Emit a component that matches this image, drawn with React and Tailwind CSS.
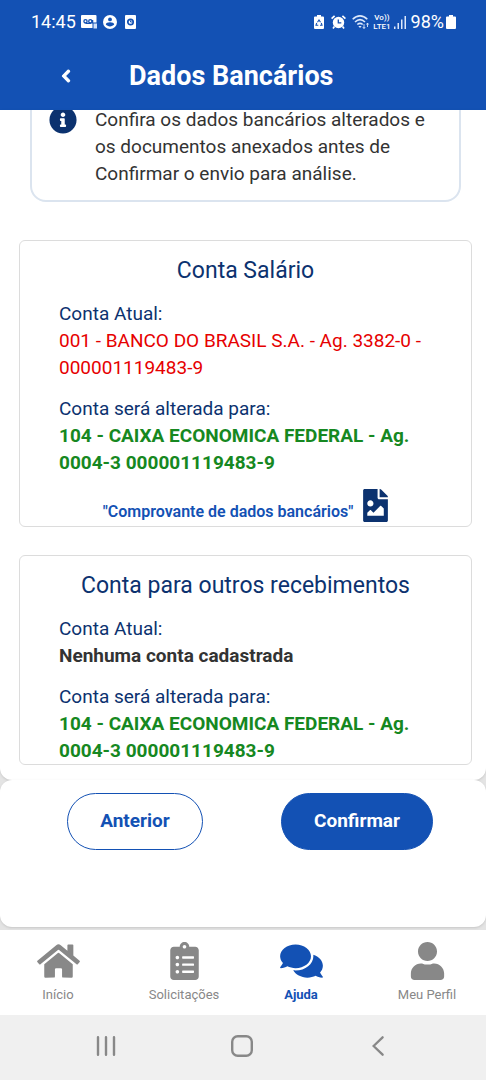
import React from 'react';
import {
  FaChevronLeft,
  FaClipboardList,
  FaComments,
  FaFileImage,
  FaHome,
  FaInfoCircle,
  FaUser,
} from 'react-icons/fa';

const StatusBar = () => (
  <div className="flex h-11 items-center justify-between pl-[31px] pr-[30px] text-white">
    <div className="flex items-center">
      <span className="text-lg leading-5">14:45</span>
      {/* Correio de voz */}
      <svg width="17" height="14" viewBox="0 0 17 14" className="ml-[5px]">
        <rect width="15.5" height="13" rx="1" fill="#fff" />
        <g fill="none" stroke="#1351b4" strokeWidth="1.3">
          <circle cx="4.5" cy="6.3" r="1.6" />
          <circle cx="9.3" cy="6.3" r="1.6" />
          <path d="M4.5 8.3h6M11.6 5v3.5" />
        </g>
        <rect x="11.5" y="7.5" width="5.5" height="6.5" fill="#1351b4" />
        <rect x="12.5" y="8.5" width="3.5" height="5" fill="#cfe0fa" />
      </svg>
      <svg width="14" height="14" viewBox="0 0 14 14" className="ml-[5px]">
        <circle cx="7" cy="7" r="7" fill="#fff" />
        <circle cx="7" cy="4.4" r="1.9" fill="#1351b4" />
        <path d="M2.8 9.6c0-3 8.4-3 8.4 0-2 2.4-6.4 2.4-8.4 0z" fill="#1351b4" />
      </svg>
      <svg width="12" height="14" viewBox="0 0 12 14" className="ml-2">
        <rect width="11" height="14" rx="1" fill="#fff" />
        <circle cx="5.5" cy="7" r="2.7" fill="none" stroke="#1351b4" strokeWidth="1.7" />
        <path d="M5.5 5.5V7H7" fill="none" stroke="#1351b4" />
      </svg>
    </div>

    <div className="flex items-center">
      <svg width="10" height="14" viewBox="0 0 10 14">
        <path d="M3 0h4v1.5h2a1 1 0 0 1 1 1V13a1 1 0 0 1-1 1H1a1 1 0 0 1-1-1V2.5a1 1 0 0 1 1-1h2z" fill="#fff" />
        <path d="M3.5 7.2 5 5l1.5 2.2M7.3 8l.7 2.2H6M4.3 10.2H2L2.7 8" fill="none" stroke="#1351b4" strokeWidth="1.1" />
      </svg>
      <svg width="15" height="14" viewBox="0 0 15 14" className="ml-[7px]">
        <circle cx="7.5" cy="7.5" r="5.7" fill="#fff" />
        <path d="M.6 3.6 3.6.8M14.4 3.6 11.4.8M3.4 11.6 2 13.4M11.6 11.6l1.4 1.8" stroke="#fff" strokeWidth="1.7" />
        <path d="M7.3 4.5v3.3h3" fill="none" stroke="#1351b4" strokeWidth="1.3" />
      </svg>
      <svg width="18" height="14" viewBox="0 0 18 14" className="ml-1.5" fill="none" stroke="#dce8fb" strokeWidth="1.6">
        <path d="M.7 4.3c4.6-4.6 10-4.6 14.6 0M3 7c3.4-3.2 6.6-3.2 10 0M5.3 9.5c2-1.7 3.4-1.7 5.4 0" />
        <path d="M6.3 11h3.4L8 13z" fill="#dce8fb" stroke="none" />
        <path d="M12 9v4.5M10.8 12l1.2 1.5 1.2-1.5M15.5 12V8M14.5 9.5l1-1.5 1 1.5" strokeWidth=".9" />
      </svg>
      <span className="ml-[3px] flex flex-col items-center text-[8px] font-medium leading-[9px]">
        <span>Vo))</span>
        <span>LTE1</span>
      </span>
      <svg width="13" height="14" viewBox="0 0 13 14" className="ml-[3px]" fill="#dce8fb">
        <rect y="11.5" width="1.5" height="2.5" />
        <rect x="3.5" y="8" width="1.5" height="6" />
        <rect x="7" y="4.5" width="1.5" height="9.5" />
        <rect x="10.5" y="1" width="1.5" height="13" />
      </svg>
      <span className="ml-1 text-lg leading-5">98%</span>
      <svg width="10" height="14" viewBox="0 0 10 14" className="ml-0.5">
        <path d="M3 0h4v1.5h2a1 1 0 0 1 1 1V13a1 1 0 0 1-1 1H1a1 1 0 0 1-1-1V2.5a1 1 0 0 1 1-1h2z" fill="#fff" />
      </svg>
    </div>
  </div>
);

const AccountCard = ({ title, current, currentClass, next, children }) => (
  <section className="mt-7 rounded-md border border-[#dcdcdc] text-[19px] leading-[27px]">
    <h2 className="mt-3.5 text-center text-[23px] leading-8 text-[#0c326f]">{title}</h2>
    <div className="mt-[13px] px-[39px]">
      <p className="text-[#0c326f]">Conta Atual:</p>
      <p className={currentClass}>{current}</p>
    </div>
    <div className="mt-3.5 px-[39px]">
      <p className="text-[#0c326f]">Conta será alterada para:</p>
      <p className="font-bold text-[#168821]">{next}</p>
    </div>
    {children}
  </section>
);

const NavItem = ({ icon: Icon, label, active }) => (
  <a
    href="#"
    className={`flex w-20 flex-col items-center ${active ? 'font-bold text-[#1351b4]' : 'text-[#888888]'}`}
  >
    <Icon className="h-[38px] w-[43px]" />
    <span className="mt-1.5 text-[13px] leading-[18px]">{label}</span>
  </a>
);

const App = () => {
  const newAccount = '104 - CAIXA ECONOMICA FEDERAL - Ag. 0004-3 000001119483-9';

  return (
    <div className="flex h-screen flex-col bg-[#e4e4e4] font-['Roboto',sans-serif]">
      <header className="h-[110px] shrink-0 bg-[#1351b4] text-white">
        <StatusBar />
        <div className="flex h-16 items-center">
          <button type="button" aria-label="Voltar" className="ml-[58px] p-0.5">
            <FaChevronLeft className="h-3.5 w-3 stroke-current stroke-[40px]" />
          </button>
          <h1 className="ml-[55px] text-[27px] font-bold leading-8">Dados Bancários</h1>
        </div>
      </header>

      <main className="min-h-0 flex-1 overflow-hidden rounded-b-xl bg-white pl-[19px] pr-3.5 shadow">
        <div className="mx-[11px] -mt-6 mb-[38px] flex rounded-2xl border-2 border-[#dbe4ef] pb-[13px] pl-[17px] pr-8 pt-[18px]">
          <FaInfoCircle className="h-7 w-7 shrink-0 text-[#0c326f]" />
          <p className="ml-[18px] text-[19px] leading-[27px] text-[#333333]">
            Confira os dados bancários alterados e os documentos anexados antes de Confirmar o envio para análise.
          </p>
        </div>

        <AccountCard
          title="Conta Salário"
          current="001 - BANCO DO BRASIL S.A. - Ag. 3382-0 - 000001119483-9"
          currentClass="text-[#e60000]"
          next={newAccount}
        >
          <a href="#" className="mb-1 mt-[13px] flex items-end justify-center gap-2.5 text-[#1351b4]">
            <span className="text-base font-semibold leading-5">"Comprovante de dados bancários"</span>
            <FaFileImage className="h-[33px] w-[25px] text-[#0c326f]" />
          </a>
        </AccountCard>

        <AccountCard
          title="Conta para outros recebimentos"
          current="Nenhuma conta cadastrada"
          currentClass="font-bold text-[#333333]"
          next={newAccount}
        />
      </main>

      <div className="mb-[3px] grid h-[147px] shrink-0 grid-cols-2 items-start justify-items-center rounded-xl bg-white pl-6 pr-[18px] pt-[13px] text-[19px] font-bold shadow">
        <button type="button" className="h-[57px] rounded-full border border-[#1351b4] px-8 text-[#1351b4]">
          Anterior
        </button>
        <button type="button" className="h-[57px] rounded-full border border-[#1351b4] bg-[#1351b4] px-8 text-white">
          Confirmar
        </button>
      </div>

      <nav className="flex h-[85px] shrink-0 justify-between bg-white pl-[18px] pr-[19px] pt-3">
        <div className="flex gap-[46px]">
          <NavItem icon={FaHome} label="Início" />
          <NavItem icon={FaClipboardList} label="Solicitações" />
        </div>
        <div className="flex gap-[46px]">
          <NavItem icon={FaComments} label="Ajuda" active />
          <NavItem icon={FaUser} label="Meu Perfil" />
        </div>
      </nav>

      {/* Botões do sistema */}
      <div className="grid h-[65px] shrink-0 grid-cols-3 place-items-center bg-[#f0f0f0] pb-1 pl-[38px] pr-10">
        <button type="button" aria-label="Recentes">
          <svg width="20" height="20" viewBox="0 0 20 20" stroke="#888" strokeWidth="2.4" strokeLinecap="round">
            <path d="M2 1.2v17.6M10 1.2v17.6M18 1.2v17.6" />
          </svg>
        </button>
        <button type="button" aria-label="Tela inicial">
          <svg width="22" height="22" viewBox="0 0 22 22" fill="none" stroke="#888" strokeWidth="2.4">
            <rect x="1.2" y="1.2" width="19.6" height="19.6" rx="5.5" />
          </svg>
        </button>
        <button type="button" aria-label="Voltar no sistema">
          <svg width="12" height="20" viewBox="0 0 12 20" fill="none" stroke="#888" strokeWidth="2.3" strokeLinecap="round">
            <path d="M10.6 1.3 1.6 10l9 8.7" />
          </svg>
        </button>
      </div>
    </div>
  );
};

export default App;
